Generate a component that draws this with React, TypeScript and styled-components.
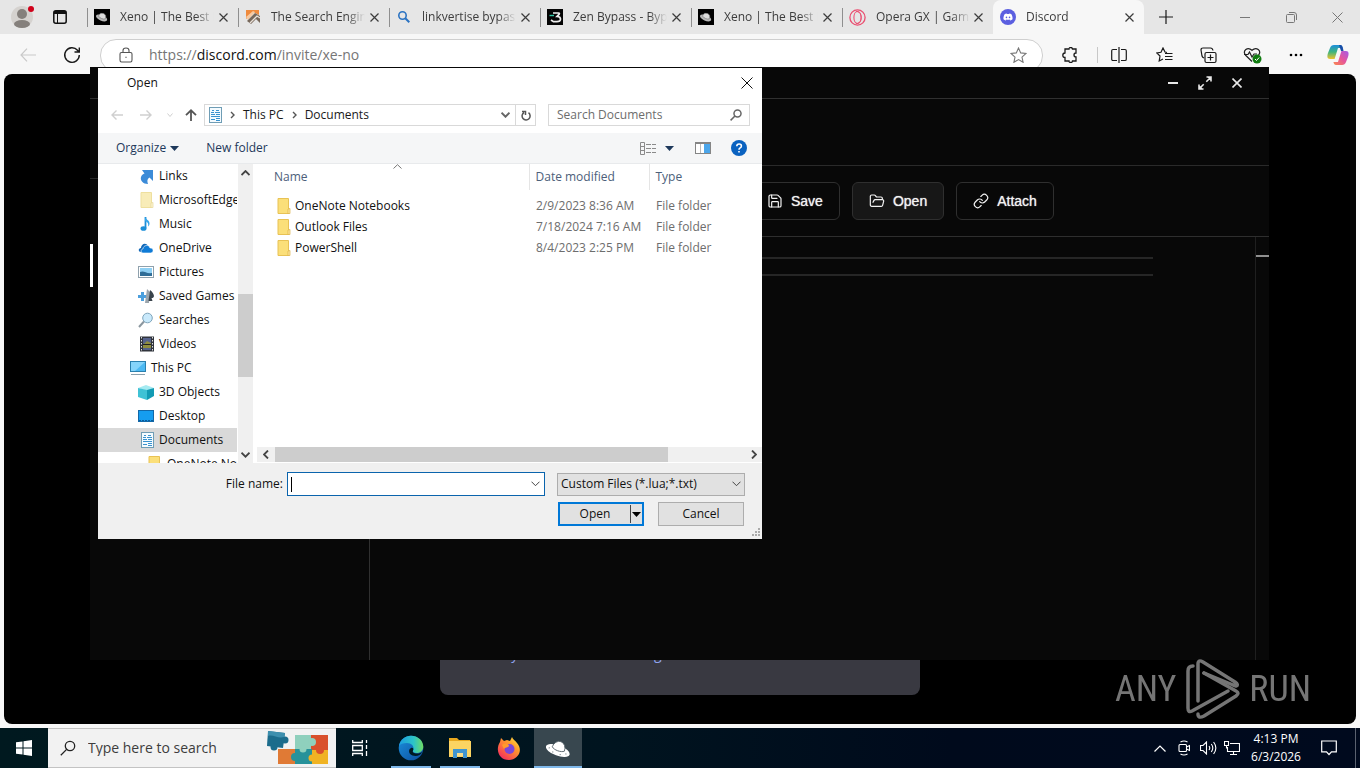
import React from "react";
import styled, { createGlobalStyle, css } from "styled-components";
import { Save, FolderOpen, Link as LinkIcon } from "lucide-react";
import { FaDiscord } from "react-icons/fa6";

const ui = `"Open Sans", "Noto Sans", sans-serif`;

const GlobalStyle = createGlobalStyle`
  * { box-sizing: border-box; }
  body { margin: 0; font-family: ${ui}; font-size: 12px; line-height: 16px; color: #111; overflow: hidden; }
  button, input, select { font: inherit; color: inherit; }
  button { background: none; border: 0; padding: 0; }
  a { color: inherit; text-decoration: none; }
  svg { display: block; flex: none; }
`;

const Desktop = styled.div`
  position: relative;
  display: flex;
  flex-direction: column;
  min-height: 100vh;
  background: #f7f7f7;
`;

/* ---------- Browser ---------- */
const TabStrip = styled.header`
  display: flex;
  height: 34px;
  background: #e6e6e6;
`;
const TabTools = styled.div`
  display: flex;
  width: 87px;
  flex: none;
`;
const IconButton = styled.button<{ $w: number; $color?: string }>`
  display: flex;
  align-items: center;
  justify-content: center;
  flex: none;
  width: ${(p) => p.$w}px;
  height: 100%;
  color: ${(p) => p.$color || "#1a1a1a"};
`;
const Tab = styled.div<{ $active?: boolean }>`
  position: relative;
  display: flex;
  align-items: center;
  flex: 0 1 151px;
  min-width: 0;
  padding: 0 7px;
  color: #3c3c3c;
  ${(p) =>
    p.$active
      ? css`
          background: #f7f7f7;
          border-radius: 8px 8px 0 0;
        `
      : css`
          &::before {
            content: "";
            position: absolute;
            left: 0;
            top: 8px;
            height: 19px;
            width: 1px;
            background: #8f8f8f;
          }
        `}
`;
const TabTitle = styled.a`
  flex: 1;
  min-width: 0;
  margin-left: 10px;
  overflow: hidden;
  white-space: nowrap;
  mask-image: linear-gradient(90deg, #000 76px, transparent 94px);
`;
const TabClose = styled.button`
  display: flex;
  flex: none;
  padding: 3px;
`;
const Spacer = styled.div`
  flex: 1;
`;
const NavBar = styled.nav`
  display: flex;
  align-items: center;
  height: 40px;
  padding: 4px 0 2px 8px;
`;
const AddressPill = styled.div`
  display: flex;
  align-items: center;
  flex: 1;
  height: 33px;
  margin-left: 4px;
  padding: 0 15px 0 18px;
  border: 1px solid #cfcfcf;
  border-radius: 16px;
  background: #fff;
`;
const Url = styled.a`
  flex: 1;
  margin-left: 16px;
  font-size: 14px;
  line-height: 20px;
  color: #767676;
  b { font-weight: 400; color: #111; }
`;
const Divider = styled.span`
  width: 1px;
  height: 16px;
  background: #c8c8c8;
`;
const Page = styled.main`
  display: flex;
  flex: 1;
  justify-content: center;
  align-items: flex-end;
  margin: 0 4px 4px;
  padding-bottom: 29px;
  border-radius: 8px;
  background: #000;
`;
const InviteCard = styled.section`
  width: 480px;
  padding: 280px 29px 31px;
  border-radius: 8px;
  background: #393941;
  color: #8fa3ee;
  font-size: 14px;
  line-height: 20px;
`;

/* ---------- Script editor window ---------- */
const AppWindow = styled.section`
  position: absolute;
  top: 67px;
  left: 90px;
  right: 91px;
  bottom: 108px;
  display: flex;
  flex-direction: column;
  background: #080808;
  color: #f2f2f2;
  font: 14px/18px "Liberation Sans", Arial, sans-serif;
`;
const AppTitle = styled.div`
  display: flex;
  justify-content: flex-end;
  height: 32px;
  padding-right: 16px;
  border-bottom: 1px solid #303030;
`;
const AppBody = styled.div`
  display: flex;
  flex: 1;
`;
const AppSide = styled.aside`
  display: flex;
  flex-direction: column;
  width: 280px;
  border-right: 1px solid #303030;
`;
const SideHead = styled.div`
  height: 80px;
  border-bottom: 1px solid #2a2a2a;
`;
const SideMarker = styled.div`
  width: 3px;
  height: 43px;
  margin-top: 65px;
  background: #fff;
`;
const AppMain = styled.div`
  display: flex;
  flex-direction: column;
  flex: 1;
`;
const ScriptTabs = styled.div`
  height: 67px;
  border-bottom: 1px solid #2a2a2a;
`;
const Actions = styled.div`
  display: flex;
  gap: 12px;
  height: 71px;
  padding: 16px 0 0 380px;
  border-bottom: 1px solid #2e2e2e;
`;
const ActionButton = styled.button<{ $active?: boolean }>`
  display: flex;
  align-items: center;
  gap: 8px;
  height: 38px;
  padding: 0 16px;
  border: 1px solid #2f2f2f;
  border-radius: 6px;
  background: ${(p) => (p.$active ? "#171717" : "#080808")};
  text-shadow: 0 0 1px #ddd;
`;
const Editor = styled.div`
  display: flex;
  flex: 1;
`;
const Code = styled.div`
  flex: 1;
  margin-right: 102px;
  padding-top: 20px;
`;
const CodeRule = styled.div`
  height: 2px;
  margin-bottom: 15px;
  background: #262626;
`;
const Minimap = styled.div`
  width: 14px;
  padding-top: 18px;
  border-left: 1px solid #1f1f1f;
`;
const MinimapMark = styled.div`
  height: 2px;
  background: #909090;
`;

/* ---------- Open file dialog ---------- */
const Dialog = styled.section`
  position: absolute;
  top: 68px;
  left: 98px;
  width: 664px;
  background: #fff;
`;
const DialogTitle = styled.div`
  display: flex;
  align-items: center;
  justify-content: space-between;
  height: 30px;
  padding: 0 9px 0 29px;
`;
const PathRow = styled.div`
  display: flex;
  align-items: center;
  height: 35px;
  padding: 0 12px 1px 6px;
  color: #1a1a1a;
`;
const PathBox = styled.div`
  display: flex;
  align-items: center;
  width: 332px;
  height: 22px;
  margin-left: 1px;
  padding-left: 4px;
  border: 1px solid #d9d9d9;
`;
const Crumb = styled.button`
  margin: 0 8px;
`;
const CrumbArrow = styled.button`
  margin-left: 8px;
  &:last-of-type { margin-left: 0; }
`;
const RefreshButton = styled.button`
  display: flex;
  align-items: center;
  justify-content: center;
  width: 20px;
  height: 20px;
  border-left: 1px solid #d9d9d9;
`;
const SearchBox = styled.label`
  display: flex;
  align-items: center;
  flex: 1;
  height: 22px;
  margin-left: 12px;
  padding: 0 7px 0 8px;
  border: 1px solid #d9d9d9;
`;
const BareInput = styled.input`
  flex: 1;
  min-width: 0;
  padding: 0;
  border: 0;
  outline: 0;
  background: transparent;
  &::placeholder { color: #6d6d6d; opacity: 1; }
`;
const CommandBar = styled.div`
  display: flex;
  align-items: center;
  height: 31px;
  padding: 0 15px 0 18px;
  border-bottom: 1px solid #e8eaec;
  background: #f5f6f7;
  color: #1e395b;
`;
const Command = styled.button<{ $gap: number; $inner?: number }>`
  display: flex;
  align-items: center;
  gap: ${(p) => p.$inner || 4}px;
  margin-right: ${(p) => p.$gap}px;
`;
const Panes = styled.div`
  display: flex;
  height: 299px;
`;
const Tree = styled.ul`
  width: 139px;
  margin: 0;
  padding: 0;
  overflow: hidden;
  list-style: none;
`;
const TreeItem = styled.li<{ $indent: number; $selected?: boolean }>`
  display: flex;
  align-items: center;
  gap: 5px;
  height: 24px;
  padding-left: ${(p) => p.$indent}px;
  white-space: nowrap;
  background: ${(p) => (p.$selected ? "#d9d9d9" : "transparent")};
`;
const VScroll = styled.div`
  display: flex;
  flex-direction: column;
  align-items: center;
  width: 15px;
  margin-left: 1px;
  padding: 6px 0 5px;
  background: #f0f0f0;
`;
const VThumb = styled.div`
  width: 15px;
  height: 83px;
  margin: 118px 0 auto;
  background: #cdcdcd;
`;
const FilePane = styled.div`
  display: flex;
  flex-direction: column;
  flex: 1;
  margin-left: 4px;
`;
const FileTable = styled.table`
  width: 100%;
  border-collapse: collapse;
  table-layout: fixed;
  color: #6d6d6d;
  th {
    position: relative;
    height: 26px;
    padding: 0 0 0 6px;
    font-weight: 400;
    text-align: left;
    color: #4c607a;
    border-left: 1px solid #e5e5e5;
  }
  th:first-child { padding-left: 17px; border-left: 0; }
  td { height: 21px; padding: 0 0 0 7px; white-space: nowrap; }
  td:first-child { padding-left: 20px; color: #111; }
  tbody::before { content: ""; display: block; height: 5px; }
`;
const NameCol = styled.col`
  width: 272px;
`;
const DateCol = styled.col`
  width: 120px;
`;
const SortMark = styled.span`
  position: absolute;
  top: 0;
  left: 50%;
`;
const FileName = styled.span`
  display: flex;
  align-items: center;
  gap: 4px;
`;
const HScroll = styled.div`
  display: flex;
  align-items: center;
  height: 15px;
  margin-top: auto;
  margin-bottom: 1px;
  padding: 0 5px 0 6px;
  background: #f0f0f0;
`;
const HThumb = styled.div`
  width: 393px;
  height: 15px;
  margin: 0 auto 0 6px;
  background: #cdcdcd;
`;
const DialogFoot = styled.form`
  position: relative;
  padding: 9px 17px 13px 120px;
  background: #f0f0f0;
`;
const FootRow = styled.div`
  display: flex;
  align-items: center;
  justify-content: flex-end;
  height: 24px;
  margin-bottom: 6px;
  white-space: nowrap;
  &:last-of-type { margin-bottom: 0; padding-right: 1px; gap: 14px; }
`;
const NameField = styled.span`
  display: flex;
  align-items: center;
  width: 258px;
  height: 24px;
  margin: 0 12px 0 4px;
  padding: 0 4px 0 3px;
  border: 1px solid #0a64ad;
  background: #fff;
`;
const Caret = styled.span`
  width: 1px;
  height: 15px;
  background: #000;
`;
const TypeField = styled.span`
  position: relative;
  display: flex;
  width: 188px;
  height: 23px;
`;
const TypeSelect = styled.select`
  width: 100%;
  padding: 0 20px 0 3px;
  appearance: none;
  border: 1px solid #adadad;
  border-radius: 0;
  background: #e1e1e1;
`;
const TypeArrow = styled.span`
  position: absolute;
  right: 4px;
  top: 8px;
  pointer-events: none;
`;
const DialogButton = styled.button<{ $primary?: boolean }>`
  display: flex;
  align-items: center;
  justify-content: center;
  width: 86px;
  height: 24px;
  border: ${(p) => (p.$primary ? "2px solid #0078d7" : "1px solid #adadad")};
  background: #e1e1e1;
`;
const SplitLabel = styled.span`
  flex: 1;
`;
const SplitArrow = styled.span`
  padding: 7px 1px 6px 1px;
  border-left: 1px solid #444;
`;
const Grip = styled.span`
  position: absolute;
  right: 2px;
  bottom: 2px;
`;

/* ---------- Taskbar ---------- */
const Taskbar = styled.footer`
  display: flex;
  height: 40px;
  background: linear-gradient(90deg, #00191f 0%, #00141f 45%, #000a1c 70%, #000a1e 100%);
  color: #fff;
`;
const TaskSearch = styled.label`
  display: flex;
  align-items: center;
  width: 288px;
  padding: 0 7px 0 12px;
  border: 1px solid #c3c3c3;
  border-width: 1px 0;
  background: #f2f2f2;
  color: #333;
  font-size: 14px;
  input { margin-left: 12px; }
  input::placeholder { color: #3d3d3d; }
`;
const TaskButton = styled.button<{ $state?: "open" | "active"; $gap?: number }>`
  display: flex;
  align-items: center;
  justify-content: center;
  flex: none;
  position: relative;
  width: 48px;
  height: 40px;
  margin-left: ${(p) => p.$gap || 0}px;
  background: ${(p) => (p.$state === "active" ? "#38474f" : "transparent")};
  &::after {
    content: "";
    position: absolute;
    bottom: 0;
    left: ${(p) => (p.$state === "active" ? 0 : 4)}px;
    right: ${(p) => (p.$state === "active" ? 0 : 4)}px;
    height: ${(p) => (p.$state ? 2 : 0)}px;
    background: #7fb8ea;
  }
`;
const Clock = styled.time`
  width: 64px;
  padding-top: 2px;
  text-align: center;
  line-height: 18px;
`;
const ShowDesktop = styled.button`
  width: 5px;
  margin-left: 6px;
  border-left: 1px solid #5a6270;
`;
const Watermark = styled.div`
  position: absolute;
  right: 49px;
  bottom: 48px;
  display: flex;
  align-items: center;
  gap: 9px;
  color: #8a8a8a;
  opacity: 0.85;
  font: 36px/62px "Liberation Sans Narrow", "Roboto Condensed", "DejaVu Sans Condensed", sans-serif;
`;

/* ---------- Drawings ---------- */
type StrokeProps = { w: number; h: number; d: string; c?: string; s?: number; fill?: string };
const Stroke = ({ w, h, d, c = "currentColor", s = 1, fill = "none" }: StrokeProps) => (
  <svg width={w} height={h} viewBox={`0 0 ${w} ${h}`} fill={fill} stroke={c} strokeWidth={s}>
    <path d={d} />
  </svg>
);
const Cross = ({ size = 10, s = 1 }: { size?: number; s?: number }) => (
  <Stroke w={size} h={size} s={s} d={`M.5 .5 L${size - 0.5} ${size - 0.5} M${size - 0.5} .5 L.5 ${size - 0.5}`} />
);
const Chevron = ({ s = 1, c = "#444" }: { s?: number; c?: string }) => <Stroke w={9} h={6} s={s} c={c} d="M.5 .7 4.5 4.7 8.5 .7" />;
const Triangle = ({ c = "#1e395b" }: { c?: string }) => (
  <svg width="9" height="5"><path d="M0 0h9L4.5 5z" fill={c} /></svg>
);

const Saucer = ({ size, badge }: { size: number; badge?: boolean }) =>
  badge ? (
    <svg width={size} height={size} viewBox="0 0 16 16">
      <rect width="16" height="16" fill="#000" />
      <g transform="rotate(24 8 8)">
        <ellipse cx="8" cy="9" rx="6" ry="2.800" fill="#b9b9b9" />
        <path d="M4.300 8.500a3.700 4.300 0 0 1 7.400 0c-1.500 1.400-5.900 1.400-7.400 0z" fill="#dcdcdc" stroke="#777" strokeWidth=".6" />
      </g>
    </svg>
  ) : (
    <svg width={size} height={size} viewBox="0 0 24 24">
      <g transform="rotate(20 12 12)">
        <ellipse cx="12" cy="14" rx="12" ry="5" fill="#fff" />
        <path d="M5.800 12.500a6.200 7.500 0 0 1 12.400 0c-2.500 2.400-9.900 2.400-12.400 0z" fill="#fff" stroke="#56636a" strokeWidth=".8" />
        <g fill="#6d787e"><circle cx="3.400" cy="14.500" r=".6" /><circle cx="8" cy="17" r=".6" /><circle cx="15.500" cy="17" r=".6" /><circle cx="20.500" cy="14.500" r=".6" /></g>
      </g>
    </svg>
  );
const SearchEngineIcon = () => (
  <svg width="16" height="16" viewBox="0 0 16 16">
    <path d="M1 1h13v5L8 3 1 10z" fill="#ef8a3c" />
    <path d="M1 8 8 2l2 1-7 8z" fill="#f7c9a0" />
    <path d="M2 12 10 4l5 3v7l-4-4-5 5z" fill="#77685b" />
    <path d="M5 14 12 7l3 2" fill="none" stroke="#e9e2da" strokeWidth="1.3" />
  </svg>
);
const ZenIcon = () => (
  <svg width="16" height="16" viewBox="0 0 16 16">
    <rect width="16" height="16" fill="#050505" />
    <path d="M6 4h5.500q1.500 0 .5 1.400L10 7.500q3.500 0 3.500 2.600T10 12.700H6.500L4 11" fill="none" stroke="#eee" strokeWidth="1.7" />
    <path d="M2.500 6.500H7" stroke="#2fc5a4" strokeWidth="1.4" />
  </svg>
);
const OperaIcon = () => (
  <svg width="17" height="17" viewBox="0 0 17 17" fill="none" stroke="#ea4e70">
    <circle cx="8.5" cy="8.5" r="7.6" strokeWidth="1.3" />
    <ellipse cx="8.5" cy="8.5" rx="3.6" ry="6" strokeWidth="1.1" />
    <path d="M7 2.5c7-.5 7 12.500 0 12" strokeWidth=".9" />
  </svg>
);
const DiscordIcon = () => (
  <svg width="16" height="16" viewBox="0 0 16 16">
    <circle cx="8" cy="8" r="8" fill="#5b5fe0" />
    <g transform="translate(3 3)" color="#fff"><FaDiscord size={10} /></g>
  </svg>
);
const Magnifier = ({ size, c, s }: { size: number; c: string; s: number }) => (
  <svg width={size} height={size} viewBox="0 0 16 16" fill="none" stroke={c} strokeWidth={s}>
    <circle cx="10" cy="6" r="4.700" /><path d="M6.600 9.400 .8 15.200" />
  </svg>
);
const Avatar = () => (
  <svg width="24" height="24" viewBox="0 0 24 24">
    <circle cx="12" cy="12" r="11" fill="#d5d2cf" />
    <circle cx="12" cy="9" r="5" fill="#85807c" />
    <ellipse cx="12" cy="19" rx="8" ry="4" fill="#85807c" />
    <circle cx="21" cy="4" r="3" fill="#d0021b" />
  </svg>
);
const Workspaces = () => (
  <svg width="14" height="14" viewBox="0 0 14 14" fill="none" stroke="#111">
    <rect x=".8" y=".8" width="12.400" height="12.400" rx="2" strokeWidth="1.500" />
    <path d="M1 2.500h12" strokeWidth="3" /><path d="M4.500 4v9" />
  </svg>
);
const Copilot = () => (
  <svg width="22" height="22" viewBox="0 0 22 22">
    <defs>
      <linearGradient id="cpA" x1="0" y1="0" x2="0" y2="1"><stop offset="0" stopColor="#1b8ddc" /><stop offset=".5" stopColor="#3fb57e" /><stop offset="1" stopColor="#f0c22c" /></linearGradient>
      <linearGradient id="cpB" x1="1" y1="0" x2="0" y2="1"><stop offset="0" stopColor="#a45be8" /><stop offset=".5" stopColor="#e5559c" /><stop offset="1" stopColor="#fb8a4c" /></linearGradient>
    </defs>
    <path d="M7 1h6c1.500 0 2 1 2.600 3H11L7.600 15H3C0 15 0 12 1 9l2-5c.7-2 2-3 4-3z" fill="url(#cpA)" />
    <path d="M15 21H9c-1.500 0-2-1-2.600-3H11l3.400-11H19c3 0 3 3 2 6l-2 5c-.7 2-2 3-4 3z" fill="url(#cpB)" />
    <path d="M12 1h1.500c1.500 0 2 1.500 2.500 3.500L16.500 7H14z" fill="#174ea8" />
  </svg>
);
const HealthIcon = () => (
  <svg width="19" height="17" viewBox="0 0 19 17" fill="none" stroke="#222">
    <path d="M9 14.500 2.600 8.300C-.8 4 4.500-1 9 3.300 13.500-1 19 4 15.400 8.300M1 7.500h4l1.500-2.500 2.500 5 2-3h3" strokeWidth="1.200" />
    <circle cx="14" cy="12" r="4.500" fill="#107c10" stroke="none" /><path d="m12 12 1.500 1.500 2.700-3" stroke="#fff" />
  </svg>
);
const Folder = ({ pale }: { pale?: boolean }) => (
  <svg width="14" height="16" viewBox="0 0 14 16">
    <path d="M1 .500h10.500v15H1z" fill={pale ? "#f8ecb8" : "#fbdf79"} stroke={pale ? "#eedf9e" : "#e8c254"} />
    <path d="M13 10.500 11 11v4.500h2z" fill={pale ? "#fff6cf" : "#ffe9a0"} stroke={pale ? "#e5d79d" : "#dcb347"} strokeWidth=".7" />
  </svg>
);
const DocIcon = () => (
  <svg width="13" height="16" viewBox="0 0 13 16">
    <rect x=".5" y=".5" width="12" height="15" fill="#f4fbff" stroke="#6f9db5" />
    <path d="M3 3.500h2M7 3.500h3M2 5.500h3M6 5.500h5M2 7.500h4M7 7.500h4M2 9.500h9M2 12.500h4M7 11.500h4M7 13.500h4" stroke="#3a93cf" />
  </svg>
);
const treeIcons: Record<string, React.ReactNode> = {
  link: <svg width="16" height="16"><path d="M4 2h11v11l-3.500-3.500C9 11 9 13 10 16c-5 0-8-3.500-7-7 .5-2 2-3 3.500-3.500z" fill="#3b8bd8" /></svg>,
  pale: <Folder pale />,
  music: <svg width="16" height="16"><path d="M7.500 1v11" stroke="#1b8fd8" strokeWidth="1.800" /><ellipse cx="5.500" cy="12.500" rx="3" ry="2.300" fill="#1b8fd8" /><path d="M7 1c1 3 5 3 4.500 7-.1 1-.7 2-1.500 2.500C11 7 9 6 7 5z" fill="#35a5ea" /></svg>,
  cloud: <svg width="16" height="16"><path d="M3 12c-3 0-3-4 0-4 0-4 5-6 7-2" fill="#1268b8" /><path d="M5 13c-2.500 0-2.500-4 0-4 0-4 6-5 7-1 4-.500 4 5 .5 5z" fill="#0f7bd6" stroke="#fff" strokeWidth=".6" /></svg>,
  picture: <svg width="16" height="16"><rect x=".5" y="2.500" width="15" height="11" fill="#fff" stroke="#8fa1ad" /><path d="M2 4h12v8H2z" fill="#8fd0f4" /><path d="M2 8c4-2 6 2 12 1v3H2z" fill="#2f6d97" /></svg>,
  games: <svg width="16" height="16"><path d="M0 7h3V4h3v3h3v3H6v3H3v-3H0z" fill="#4b9fdd" /><path d="m9 1 3 3-1 11H7l1-7z" fill="#9aa4ac" /><path d="M12 2c5 4 5 8 1.500 8l1 3h-4z" fill="#39434b" /></svg>,
  search: <svg width="16" height="16"><path d="M6 9.500 1 15" stroke="#8b979f" strokeWidth="2" /><circle cx="9.500" cy="6" r="4.800" fill="#c9e9fb" stroke="#7fa5bb" /></svg>,
  video: <svg width="14" height="16"><rect width="14" height="15" y=".5" fill="#30343c" /><path d="M1.500 1v14M12.500 1v14" stroke="#ddd" strokeDasharray="1.500 1.500" /><path d="M3 2h8v12H3z" fill="#55628c" /><path d="m3 9 4-4 4 2v5H3z" fill="#8f8d3e" /><path d="M3 8.500h8" stroke="#222" /></svg>,
  pc: <svg width="16" height="16"><rect x=".5" y="1.500" width="15" height="10" fill="#4db9f2" stroke="#2a80ae" /><path d="M1 2h14L5 11H1z" fill="#85d4fa" /><path d="M1 14.500h14" stroke="#8aa0ad" /></svg>,
  cube: <svg width="16" height="16"><path d="M0 4 8 1l8 3-6 3z" fill="#a5eaf1" /><path d="m0 4 9 2v10l-9-3z" fill="#3fc2d5" /><path d="m9 6 7-2v8l-7 4z" fill="#129bb4" /></svg>,
  desktop: <svg width="16" height="16"><rect x=".5" y="2.500" width="15" height="11" fill="#159df0" stroke="#1268a8" /><path d="M1 12.500h14" stroke="#0a5c9b" strokeDasharray="2 1" /></svg>,
  doc: <DocIcon />,
  folder: <Folder />,
};
const treeRows: [string, string, number, boolean?][] = [
  ["link", "Links", 40],
  ["pale", "MicrosoftEdge", 42],
  ["music", "Music", 40],
  ["cloud", "OneDrive", 40],
  ["picture", "Pictures", 40],
  ["games", "Saved Games", 40],
  ["search", "Searches", 40],
  ["video", "Videos", 42],
  ["pc", "This PC", 32],
  ["cube", "3D Objects", 40],
  ["desktop", "Desktop", 40],
  ["doc", "Documents", 43, true],
  ["folder", "OneNote Notebooks", 50],
];
const files = [
  ["OneNote Notebooks", "2/9/2023 8:36 AM"],
  ["Outlook Files", "7/18/2024 7:16 AM"],
  ["PowerShell", "8/4/2023 2:25 PM"],
];
const tabs: [React.ReactNode, string][] = [
  [<Saucer size={16} badge />, "Xeno | The Best R"],
  [<SearchEngineIcon />, "The Search Engin"],
  [<svg width="16" height="16" viewBox="0 0 16 16"><circle cx="6.500" cy="6.500" r="3.700" fill="none" stroke="#2b73c2" strokeWidth="1.600" /><path d="m9.300 9.300 4 4" stroke="#2b73c2" strokeWidth="2" /></svg>, "linkvertise bypass"],
  [<ZenIcon />, "Zen Bypass - Byp"],
  [<Saucer size={16} badge />, "Xeno | The Best R"],
  [<OperaIcon />, "Opera GX | Gamin"],
];

const PuzzleArt = () => (
  <svg width="63" height="36" viewBox="0 0 63 36">
    <path d="M29 5h16v14H29z" fill="#8fd0bd" /><path d="M45 5h17v15H45z" fill="#d9502c" />
    <path d="M12 19h17v15H12z" fill="#e07a35" /><path d="M29 19h17v15H29z" fill="#27929a" /><path d="M46 20h16v14H46z" fill="#f0b323" />
    <circle cx="46" cy="12" r="4" fill="#8fd0bd" /><circle cx="54" cy="20" r="4" fill="#d9502c" /><circle cx="29" cy="27" r="4" fill="#27929a" /><circle cx="37" cy="19" r="3.500" fill="#8fd0bd" /><circle cx="46" cy="28" r="3.500" fill="#f0b323" />
    <g fill="#1c6c8c"><path d="m2 1 17 2-2 15-16-2z" /><circle cx="19" cy="10" r="3.500" /><circle cx="8" cy="17" r="3.500" /></g>
    <path d="m2 1 17 2-1 4C12 9 7 4 2 6z" fill="#3d8fae" />
  </svg>
);
const EdgeIcon = () => (
  <svg width="26" height="26" viewBox="0 0 26 26">
    <defs>
      <linearGradient id="edA"><stop offset="0" stopColor="#1c9de0" /><stop offset=".6" stopColor="#2cc4c8" /><stop offset="1" stopColor="#6fdc62" /></linearGradient>
      <linearGradient id="edB" x1="0" y1="0" x2="1" y2="1"><stop offset="0" stopColor="#1b90dc" /><stop offset="1" stopColor="#0c4d9f" /></linearGradient>
    </defs>
    <circle cx="13" cy="13" r="12.300" fill="url(#edB)" />
    <path d="M1 11C2 5 7 .7 13 .7c7 0 12.300 5 12.300 10.800 0 4-3 6.500-6.500 6.500-3 0-4.300-1-3.800-2.500C17 11 13 8 9 8c-4 0-7 1-8 3z" fill="url(#edA)" />
    <path d="M15 15.500c-1 2 1 3 4 3 2.500 0 4-.700 5.500-1.800-2 3.800-6 5-10 3.800-4-1.300-4.500-6-1.500-7.500 2-.6 3 1 2 2.500z" fill="#001a22" />
  </svg>
);
const ExplorerIcon = () => (
  <svg width="24" height="22" viewBox="0 0 24 22">
    <path d="M1 1h8l2 2h11v17H1z" fill="#e9a91f" /><path d="M1 4h22v16H1z" fill="#fcd462" />
    <path d="M5 12h14v9h-4v-5H9v5H5z" fill="#3f95d0" /><path d="M9 16h6v3H9z" fill="#f8dd8c" />
  </svg>
);
const FirefoxIcon = () => (
  <svg width="24" height="24" viewBox="0 0 24 24">
    <defs><linearGradient id="fx" x1="1" y1="0" x2=".2" y2="1"><stop offset="0" stopColor="#fff04a" /><stop offset=".4" stopColor="#ff9a2b" /><stop offset="1" stopColor="#f5295f" /></linearGradient></defs>
    <path d="M3 6 4 2l3 3 3-1 3 1 2-4c1 3 3 3 5 6 7 8 0 17-8 17C2 24-2 14 3 6z" fill="url(#fx)" />
    <circle cx="12.500" cy="13" r="5" fill="#7a46d8" /><path d="M5 9c3-3 7-1 7 1-1 2-4 1-5 3z" fill="#ff9a2b" />
  </svg>
);

export default function App() {
  return (
    <Desktop>
      <GlobalStyle />
      <TabStrip>
        <TabTools>
          <IconButton $w={44} aria-label="Profile"><Avatar /></IconButton>
          <IconButton $w={32} aria-label="Workspaces"><Workspaces /></IconButton>
        </TabTools>
        {tabs.map(([icon, title], i) => (
          <Tab key={i}>
            {icon}
            <TabTitle href="#">{title}</TabTitle>
            <TabClose aria-label="Close tab"><Cross size={9} s={1.2} /></TabClose>
          </Tab>
        ))}
        <Tab $active>
          <DiscordIcon />
          <TabTitle href="#">Discord</TabTitle>
          <TabClose aria-label="Close tab"><Cross size={9} s={1.2} /></TabClose>
        </Tab>
        <IconButton $w={44} aria-label="New tab"><Stroke w={14} h={14} s={1.2} d="M7 0v14M0 7h14" /></IconButton>
        <Spacer />
        <IconButton $w={46} $color="#777" aria-label="Minimize"><Stroke w={10} h={10} d="M0 5.500h10" /></IconButton>
        <IconButton $w={46} $color="#777" aria-label="Restore"><Stroke w={11} h={11} d="M1.500 2.500h6q1 0 1 1v6q0 1-1 1h-6q-1 0-1-1v-6q0-1 1-1zM3 .5h5q2.500 0 2.500 2.500v5" /></IconButton>
        <IconButton $w={46} $color="#777" aria-label="Close"><Cross size={11} /></IconButton>
      </TabStrip>
      <NavBar>
        <IconButton $w={40} $color="#c9c9c9" aria-label="Back"><Stroke w={16} h={14} s={1.2} d="M16 7H1M7 .7 1 7l6 6.300" /></IconButton>
        <IconButton $w={48} aria-label="Refresh"><Stroke w={18} h={18} s={1.4} d="M16.300 9A7.300 7.300 0 1 1 14.500 4.200L16 6M16.300 1.500V6H11.500" /></IconButton>
        <AddressPill>
          <Stroke w={14} h={16} c="#555" s={1.1} d="M2.500 5.500h9q1.500 0 1.500 1.500v6q0 2-1.500 2h-9Q1 15 1 13V7q0-1.500 1.500-1.500zM4 5.500V3.500q0-2.500 3-2.500t3 2.500v2M6.300 10.300h1.400" />
          <Url href="#">https://<b>discord.com</b>/invite/xe-no</Url>
          <Stroke w={17} h={16} c="#777" s={1.1} d="m8.500 1 2.200 4.900 5.300.6-4 3.600 1.100 5.200-4.600-2.700-4.600 2.700L5 10.100 1 6.500l5.300-.6z" />
        </AddressPill>
        <IconButton $w={54} aria-label="Extensions"><Stroke w={16} h={16} s={1.3} d="M3 2h4q0-1.500 1.700-1.500T10.500 2H14v4q-2 0-2 2t2 2v4h-3.500q0 1.500-1.800 1.500T7 14H3v-3.500Q.8 10.500.8 8.300T3 6z" /></IconButton>
        <Divider />
        <IconButton $w={42} aria-label="Split screen"><Stroke w={16} h={16} s={1.2} d="M8 0v16M6 2.500H2q-1.300 0-1.300 1.300v8.400Q.7 13.500 2 13.500h4M10 2.500h4q1.300 0 1.300 1.300v8.400q0 1.300-1.300 1.300h-4" /></IconButton>
        <IconButton $w={48} aria-label="Favorites"><Stroke w={17} h={16} s={1.2} d="M11 5.500 9 5 7 1 5 5.300.8 6l3.200 3-.8 5L7 12M9 6.500h7.500M9 9.500h7.500M9 12.500h7.500" /></IconButton>
        <IconButton $w={40} aria-label="Collections"><Stroke w={17} h={17} s={1.2} d="M6.500 5.500h8q1.500 0 1.500 1.500v7q0 1.500-1.500 1.500h-8Q5 15.500 5 14V7q0-1.500 1.500-1.500zM10.500 7.500v6M7.500 10.500h6M13 3.500Q12.500 1 10.500 1H3Q1 1 1 3l1 6q.5 1.500 2 2" /></IconButton>
        <IconButton $w={48} aria-label="Performance"><HealthIcon /></IconButton>
        <IconButton $w={40} aria-label="More"><svg width="14" height="4"><circle cx="2" cy="2" r="1.300" /><circle cx="7" cy="2" r="1.300" /><circle cx="12" cy="2" r="1.300" /></svg></IconButton>
        <IconButton $w={44} aria-label="Copilot"><Copilot /></IconButton>
      </NavBar>
      <Page>
        <InviteCard><a href="#">Already have an account? Log in</a></InviteCard>
      </Page>

      <AppWindow>
        <AppTitle>
          <IconButton $w={32} $color="#e8e8e8" aria-label="Minimize"><Stroke w={10} h={10} s={2} d="M0 5h10" /></IconButton>
          <IconButton $w={32} $color="#e8e8e8" aria-label="Maximize"><Stroke w={14} h={14} s={1.6} d="M8.500 1H13v4.500M12.500 3.500 10.500 1.500M13 1 8.300 5.700M1 8.500V13h4.500M1.500 10.500l2 2M1 13l4.700-4.700" /></IconButton>
          <IconButton $w={32} $color="#e8e8e8" aria-label="Close"><Cross size={10} s={1.6} /></IconButton>
        </AppTitle>
        <AppBody>
          <AppSide><SideHead /><SideMarker /></AppSide>
          <AppMain>
            <ScriptTabs />
            <Actions>
              <ActionButton><Save size={16} strokeWidth={1.8} />Save</ActionButton>
              <ActionButton $active><FolderOpen size={16} strokeWidth={1.8} />Open</ActionButton>
              <ActionButton><LinkIcon size={16} strokeWidth={1.8} />Attach</ActionButton>
            </Actions>
            <Editor>
              <Code><CodeRule /><CodeRule /></Code>
              <Minimap><MinimapMark /></Minimap>
            </Editor>
          </AppMain>
        </AppBody>
      </AppWindow>

      <Dialog role="dialog" aria-label="Open">
        <DialogTitle>Open<button aria-label="Close"><Cross size={12} /></button></DialogTitle>
        <PathRow>
          <IconButton $w={26} $color="#cfcfcf" aria-label="Back"><Stroke w={12} h={10} s={1.4} d="M12 5H1M5.500.5 1 5l4.500 4.500" /></IconButton>
          <IconButton $w={32} $color="#cfcfcf" aria-label="Forward"><Stroke w={12} h={10} s={1.4} d="M0 5h11M6.500.5 11 5 6.500 9.500" /></IconButton>
          <IconButton $w={16} $color="#cfcfcf" aria-label="Recent"><Stroke w={6} h={5} d="M.5 .5 3 3.500 5.500.5" /></IconButton>
          <IconButton $w={25} $color="#555" aria-label="Up"><Stroke w={12} h={12} s={1.8} d="M6 12V1.500M1 6.200 6 1.300l5 4.900" /></IconButton>
          <PathBox>
            <DocIcon />
            <CrumbArrow aria-label="Root"><Stroke w={5} h={8} c="#555" s={1.4} d="M1 1l3 3-3 3" /></CrumbArrow>
            <Crumb>This PC</Crumb>
            <Stroke w={5} h={8} c="#555" s={1.4} d="M1 1l3 3-3 3" />
            <Crumb>Documents</Crumb>
            <Spacer />
            <IconButton $w={20} aria-label="Previous locations"><Chevron s={2} c="#666" /></IconButton>
            <RefreshButton aria-label="Refresh"><Stroke w={10} h={11} c="#555" s={1.5} d="M3 2.500A4 4 0 1 0 7.500 2.700M1 1.500h3.500V5" /></RefreshButton>
          </PathBox>
          <SearchBox>
            <BareInput placeholder="Search Documents" aria-label="Search Documents" />
            <Magnifier size={12} c="#666" s={2} />
          </SearchBox>
        </PathRow>
        <CommandBar>
          <Command $gap={27}>Organize<Triangle /></Command>
          <Command $gap={0}>New folder</Command>
          <Spacer />
          <Command $gap={21} $inner={8} aria-label="Change view">
            <Stroke w={17} h={13} c="#8a8a8a" d="M.5 .5h4v12h-4zM.5 4.500h4M.5 8.500h4M6 2.500h5M12 2.500h4M6 6.500h5M12 6.500h4M6 10.500h5M12 10.500h4" />
            <Triangle />
          </Command>
          <Command $gap={20} aria-label="Preview pane">
            <svg width="16" height="12"><rect x=".5" y=".5" width="15" height="11" fill="#fff" stroke="#858585" /><path d="M1 1.500h14" stroke="#858585" /><path d="M9 2h6v9H9z" fill="#4ca6ea" /><path d="M5.500 2v9" stroke="#bbb" /></svg>
          </Command>
          <Command $gap={0} aria-label="Help">
            <svg width="16" height="16"><circle cx="8" cy="8" r="8" fill="#0a62c0" /><path d="M5.800 6.200q0-2.200 2.300-2.200t2.300 2q0 1.200-1.200 1.900T8 9.700M8 11v1.600" fill="none" stroke="#fff" strokeWidth="1.600" /></svg>
          </Command>
        </CommandBar>
        <Panes>
          <Tree>
            {treeRows.map(([icon, label, indent, sel]) => (
              <TreeItem key={label} $indent={indent} $selected={sel}>{treeIcons[icon]}{label}</TreeItem>
            ))}
          </Tree>
          <VScroll>
            <Stroke w={9} h={6} c="#444" s={1.8} d="M.5 5 4.500 1 8.500 5" />
            <VThumb />
            <Chevron s={1.8} />
          </VScroll>
          <FilePane>
            <FileTable>
              <colgroup><NameCol /><DateCol /><col /></colgroup>
              <thead>
                <tr><th>Name<SortMark><Stroke w={9} h={5} c="#777" d="M.5 4.500 4.500.700 8.500 4.500" /></SortMark></th><th>Date modified</th><th>Type</th></tr>
              </thead>
              <tbody>
                {files.map(([name, date]) => (
                  <tr key={name}><td><FileName><Folder />{name}</FileName></td><td>{date}</td><td>File folder</td></tr>
                ))}
              </tbody>
            </FileTable>
            <HScroll>
              <Stroke w={6} h={9} c="#444" s={1.8} d="M5 .5 1 4.500 5 8.500" />
              <HThumb />
              <Stroke w={6} h={9} c="#444" s={1.8} d="M1 .5 5 4.500 1 8.500" />
            </HScroll>
          </FilePane>
        </Panes>
        <DialogFoot>
          <FootRow>
            <label htmlFor="file-name">File name:</label>
            <NameField><Caret /><BareInput id="file-name" /><Chevron /></NameField>
            <TypeField>
              <TypeSelect aria-label="File type"><option>Custom Files (*.lua;*.txt)</option></TypeSelect>
              <TypeArrow><Chevron /></TypeArrow>
            </TypeField>
          </FootRow>
          <FootRow>
            <DialogButton type="button" $primary><SplitLabel>Open</SplitLabel><SplitArrow><Triangle c="#000" /></SplitArrow></DialogButton>
            <DialogButton type="button">Cancel</DialogButton>
          </FootRow>
          <Grip><svg width="9" height="9" fill="#aaa"><path d="M7 0h2v2H7zM7 3h2v2H7zM7 6h2v2H7zM4 3h2v2H4zM4 6h2v2H4zM1 6h2v2H1z" /></svg></Grip>
        </DialogFoot>
      </Dialog>

      <Watermark>
        ANY
        <svg width="55" height="62" viewBox="0 0 55 62" fill="none" stroke="currentColor" strokeWidth="3.500" strokeLinejoin="round" strokeLinecap="round">
          <path d="M8 8Q3 8 3 13v37q0 5 4 3l36-20" />
          <path d="M13 43V6q0-5 5-2l32 20q4 3 1 4l-3-1L19 15" />
          <path d="M13 56q0 5 6 2l32-20q4-3 0-5L19 15" />
        </svg>
        RUN
      </Watermark>

      <Taskbar>
        <TaskButton aria-label="Start"><svg width="16" height="16" fill="#fff"><path d="M0 2.300 6.500 1.400v6.100H0zM7.500 1.200 16 0v7.500H7.500zM0 8.500h6.500v6.100L0 13.700zM7.500 8.500H16V16l-8.500-1.200z" /></svg></TaskButton>
        <TaskSearch>
          <Magnifier size={16} c="#222" s={1.3} />
          <BareInput placeholder="Type here to search" aria-label="Search" />
          <PuzzleArt />
        </TaskSearch>
        <TaskButton aria-label="Task view"><Stroke w={16} h={16} s={1.3} c="#fff" d="M.7 0v2.500h9.600V0M.7 5.500h9.600v5H.7zM.7 16v-2.500h9.600V16M14.500 0v3M14.500 5v4M14.500 11v5" /></TaskButton>
        <TaskButton $state="open" $gap={3} aria-label="Edge"><EdgeIcon /></TaskButton>
        <TaskButton $state="open" $gap={1} aria-label="File Explorer"><ExplorerIcon /></TaskButton>
        <TaskButton $gap={1} aria-label="Firefox"><FirefoxIcon /></TaskButton>
        <TaskButton $state="active" $gap={1} aria-label="Xeno"><Saucer size={25} /></TaskButton>
        <Spacer />
        <IconButton $w={24} $color="#fff" aria-label="Hidden icons"><Stroke w={12} h={7} s={1.2} d="M.5 6.500 6 1l5.500 5.500" /></IconButton>
        <IconButton $w={24} $color="#fff" aria-label="Meet now"><Stroke w={12} h={16} s={1.1} d="M2 4.500h5.500q1 0 1 1v5q0 1-1 1H2q-1 0-1-1v-5q0-1 1-1zM8.500 7 11.500 5.500v5L8.500 9M2.500 2q3.500-2 7 0M2.500 14q3.500 2 7 0" /></IconButton>
        <IconButton $w={24} $color="#fff" aria-label="Volume"><Stroke w={17} h={14} s={1.1} d="M.5 4.500H3l3.500-3.500v12L3 9.500H.5zM9 5q1.500 2 0 4M11.300 3q3 4 0 8M13.600 1q4.500 6 0 12" /></IconButton>
        <IconButton $w={24} $color="#fff" aria-label="Network"><Stroke w={16} h={14} s={1.1} d="M6 2.500h9.500v8H3.500V6M9.500 10.500v3M6 13.500h7M.5 .5h4v4h-4zM2.500 4.500v3" /></IconButton>
        <Clock>4:13 PM<br />6/3/2026</Clock>
        <IconButton $w={41} $color="#fff" aria-label="Notifications"><Stroke w={16} h={16} s={1.2} d="M.7 1h14.600v10.800H10.500L8 14.500 5.500 11.800H.7z" /></IconButton>
        <ShowDesktop aria-label="Show desktop" />
      </Taskbar>
    </Desktop>
  );
}
